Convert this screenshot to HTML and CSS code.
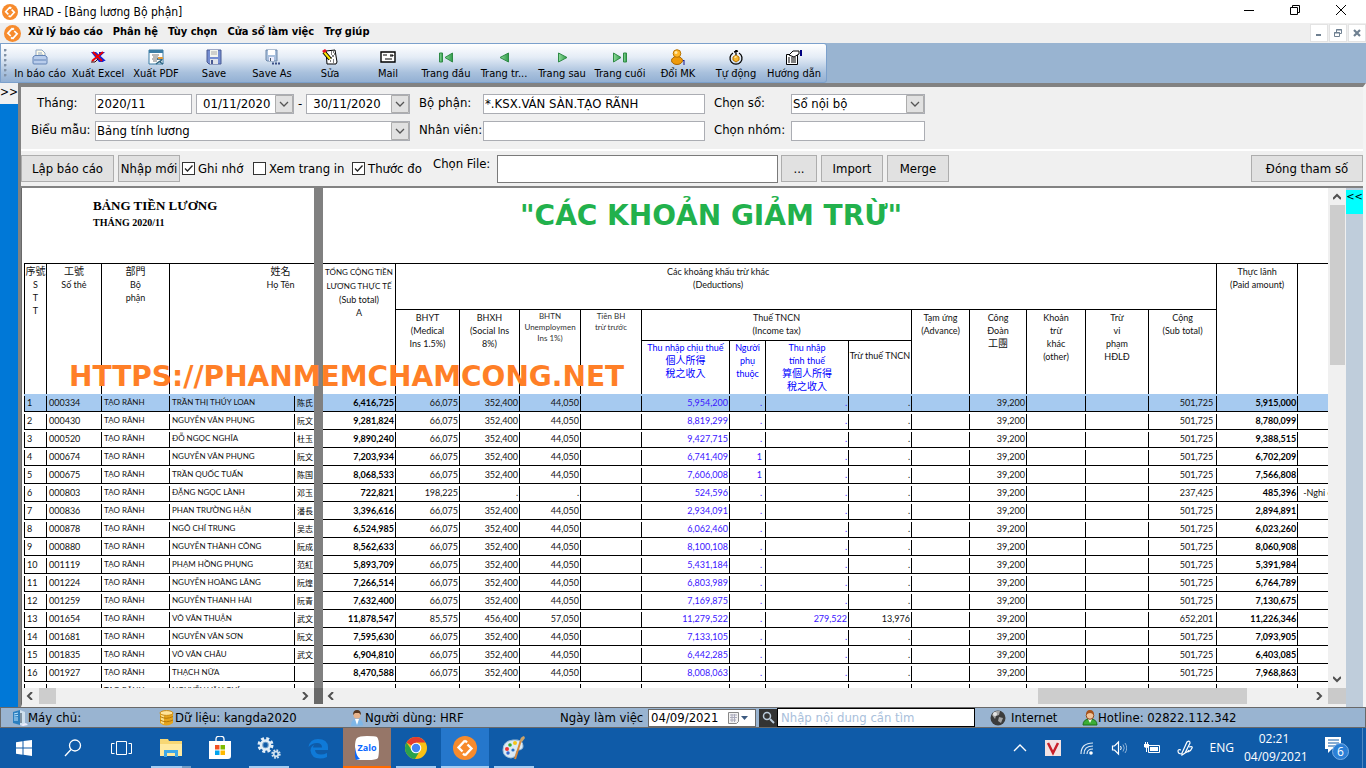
FILE: index.html
```html
<!DOCTYPE html>
<html lang="vi">
<head>
<meta charset="utf-8">
<title>HRAD - [Bảng lương Bộ phận]</title>
<link rel="stylesheet" href="styles.css">
</head>
<body>
<svg class="defs" aria-hidden="true">
  <symbol id="logo" viewBox="0 0 24 24">
    <circle cx="12" cy="12" r="12" fill="#f78b2d"/>
    <path d="M12 4.500 5.500 11.500 9.500 15.500M12 19.500 18.500 12.500 14.500 8.500M12 4.500 14 6.500M12 19.500 10 17.500" fill="none" stroke="#fff" stroke-width="2.400"/>
  </symbol>
  <symbol id="left" viewBox="0 0 8 8"><path d="M6 0 2 4l4 4" fill="none" stroke="#505050" stroke-width="2"/></symbol>
  <symbol id="right" viewBox="0 0 8 8"><path d="M2 0l4 4-4 4" fill="none" stroke="#505050" stroke-width="2"/></symbol>
  <symbol id="up" viewBox="0 0 8 8"><path d="M0 6l4-4 4 4" fill="none" stroke="#505050" stroke-width="2"/></symbol>
  <symbol id="down" viewBox="0 0 8 8"><path d="M0 2l4 4 4-4" fill="none" stroke="#505050" stroke-width="2"/></symbol>
  <linearGradient id="grn" x2="1"><stop stop-color="#8fdc9a"/><stop offset="1" stop-color="#2e9a4a"/></linearGradient>
</svg>

<header class="titlebar">
  <svg class="logo"><use href="#logo"/></svg>
  <h1>HRAD - [Bảng lương Bộ phận]</h1>
  <div class="winbtns">
    <button aria-label="Minimize"><svg viewBox="0 0 12 12"><path d="M1 6.500h10" stroke="#000"/></svg></button>
    <button aria-label="Restore"><svg viewBox="0 0 12 12"><path d="M1.500 3.500h7v7h-7zM3.500 3.500v-2h7v7h-2" fill="none" stroke="#000"/></svg></button>
    <button aria-label="Close"><svg viewBox="0 0 12 12"><path d="M1 1l10 10M11 1 1 11" stroke="#000"/></svg></button>
  </div>
</header>

<nav class="menubar">
  <svg class="logo big"><use href="#logo"/></svg>
  <button>Xử lý báo cáo</button><button>Phân hệ</button><button>Tùy chọn</button><button>Cửa sổ làm việc</button><button>Trợ giúp</button>
  <div class="mdi">
    <button aria-label="Minimize child"><svg viewBox="0 0 10 10"><path d="M2 7h5" stroke="#6f8091" stroke-width="2"/></svg></button>
    <button aria-label="Restore child"><svg viewBox="0 0 10 10"><path d="M1.500 4.500h5v4h-5zM3.500 4V1.500h5v4H7M1 5h6M3 2h6" fill="none" stroke="#6f8091"/></svg></button>
    <button aria-label="Close child"><svg viewBox="0 0 10 10"><path d="M2 2l6 6M8 2 2 8" stroke="#6f8091" stroke-width="2.200"/></svg></button>
  </div>
</nav>

<div class="toolwrap">
  <div class="toolstrip">
    <span class="grip"></span>
    <button><svg viewBox="0 0 16 16"><path d="M4 1h6l3 3v5H4z" fill="#fffbe8" stroke="#8fa6c4"/><path d="M6 4h4M6 6h5" stroke="#8fa6c4"/><path d="M1 8l2-1.500h10L15 8v6q0 1-1 1H2q-1 0-1-1z" fill="#b9cdec" stroke="#6283b5"/><path d="M2 11h12" stroke="#6283b5"/></svg>In báo cáo</button>
    <button><svg viewBox="0 0 16 16"><path d="M9 3h6L9.500 8 16 12H9z" fill="#0a1bd0"/><path d="M1 3h5l9 8-2 2H9z" fill="#1523d8"/><path d="M2 12 13 3M3 3l9 9" stroke="#e00" stroke-width="2"/><path d="M1 13h4l3-3" stroke="#400" fill="none"/></svg>Xuất Excel</button>
    <button><svg viewBox="0 0 16 16"><path d="M1 1h14v14H1z" fill="#fff" stroke="#3a7ca5"/><path d="M1 2.500h14" stroke="#3a7ca5" stroke-width="3"/><path d="M4 6h7M5 8h5M4 10h6M5 12h4" stroke="#777"/><path d="M9 10h5l-2 3 3 2M12 12l-4 3" fill="none" stroke="#2c6280" stroke-width="1.500"/><path d="M10 9h5" stroke="#e29c3c" stroke-width="2"/></svg>Xuất PDF</button>
    <button><svg viewBox="0 0 16 16"><path d="M1 1h14v14H3l-2-2z" fill="#758dd1" stroke="#4a5a92"/><path d="M4 1h8v7H4z" fill="#f4f5ee"/><path d="M5 3h6M5 5h6" stroke="#aaa"/><path d="M4 10h8v5H4z" fill="#dfe3ea"/><path d="M5 11h2v4H5z" fill="#4a5a92"/></svg>Save</button>
    <button><svg viewBox="0 0 16 16"><path d="M2 1h11v11H3l-1-1z" fill="#a9c0dd" stroke="#6c87a9"/><path d="M4 1h7v5H4z" fill="#fff"/><path d="M5 8h5v4H5z" fill="#eef"/><path d="M6 9h1v3H6z" fill="#456"/><path d="M8 14.500h2m1 0h2m1 0h2" stroke="#3a4f87" stroke-width="2"/></svg>Save As</button>
    <button><svg viewBox="0 0 16 16"><path d="M4 2l9-1 2 12-1 2H5z" fill="#fff" stroke="#000"/><path d="M9 3h1m1 0h1M9 5h1m2 0h1M10 7h2M7 9h1m1 0h1m1 2h1m-4 1h1m2 1h1" stroke="#000"/><path d="M2 3l6 7" stroke="#000" stroke-width="4"/><path d="M2 3l6 7" stroke="#ffe800" stroke-width="2"/><path d="M0 2l3-2 2 2-3 2z" fill="#e81123"/></svg>Sửa</button>
    <button><svg viewBox="0 0 16 16"><path d="M1 3h14v10H1z" fill="#fff" stroke="#000" stroke-width="1.400"/><path d="M3 6h4M5 10h7M10 6h3v1h-3" stroke="#000" fill="none"/></svg>Mail</button>
    <button><svg viewBox="0 0 16 16"><path d="M1.500 4v9h3V4z" fill="url(#grn)" stroke="#2e8a45"/><path d="M14.500 4v9L7 8.500z" fill="url(#grn)" stroke="#2e8a45"/></svg>Trang đầu</button>
    <button><svg viewBox="0 0 16 16"><path d="M12.500 4v9L4 8.500z" fill="url(#grn)" stroke="#2e8a45"/></svg>Trang tr...</button>
    <button><svg viewBox="0 0 16 16"><path d="M4.500 4v9L13 8.500z" fill="url(#grn)" stroke="#2e8a45"/></svg>Trang sau</button>
    <button><svg viewBox="0 0 16 16"><path d="M1.500 4v9L9 8.500z" fill="url(#grn)" stroke="#2e8a45"/><path d="M11.500 4v9h3V4z" fill="url(#grn)" stroke="#2e8a45"/></svg>Trang cuối</button>
    <button><svg viewBox="0 0 16 16"><ellipse cx="7" cy="11.500" rx="5.500" ry="4" fill="#ef9a0a" stroke="#a86300"/><circle cx="7" cy="4.500" r="3.800" fill="#ffb628" stroke="#b87300"/><circle cx="6" cy="3.500" r="1.500" fill="#ffe9a8"/><path d="M13 12l1-1v5" stroke="#15158c" fill="none"/></svg>Đổi MK</button>
    <button><svg viewBox="0 0 16 16"><path d="M11 4a6 6 0 1 1-6 0M8 1v5M6 3l4-1" fill="none" stroke="#000" stroke-width="1.300"/><path d="M5 8l3-2 3 2v3l-3 2-3-2z" fill="#f6b62c" stroke="#b87300"/><path d="M6 8l2-1 1 1-2 1z" fill="#fff2b5"/></svg>Tự động</button>
    <button><svg viewBox="0 0 16 16"><path d="M.5 5.500h11v10H.5z" fill="#fff" stroke="#000"/><path d="M2 9h2m1 0h5M2 11h2m1 0h5M2 13h2m1 0h5" stroke="#000"/><path d="M3 6l4-4h6v3L8 8z" fill="#fff" stroke="#000"/><path d="M14 1h2v6h-2z" fill="#000080"/></svg>Hướng dẫn</button>
  </div>
</div>

<main class="work">
  <aside class="dock-left"><button>&gt;&gt;</button></aside>
  <div class="child">
    <form class="params">
      <label class="indent" for="thang">Tháng:</label>
      <div class="dates">
        <input id="thang" class="month" value="2020/11">
        <select class="date" aria-label="Từ ngày"><option>01/11/2020</option></select>
        <span>-</span>
        <select class="date wide" aria-label="Đến ngày"><option>30/11/2020</option></select>
      </div>
      <label for="bophan">Bộ phận:</label>
      <input id="bophan" value="*.KSX.VÁN SÀN.TẠO RÃNH">
      <label for="so">Chọn sổ:</label>
      <select id="so"><option>Sổ nội bộ</option></select>
      <label for="mau">Biểu mẫu:</label>
      <select id="mau"><option>Bảng tính lương</option></select>
      <label for="nv">Nhân viên:</label>
      <input id="nv">
      <label for="nhom">Chọn nhóm:</label>
      <input id="nhom">
    </form>

    <div class="actions">
      <button class="btn b-report">Lập báo cáo</button>
      <button class="btn b-new">Nhập mới</button>
      <label class="chk c1"><input type="checkbox" checked>Ghi nhớ</label>
      <label class="chk c2"><input type="checkbox">Xem trang in</label>
      <label class="chk c3"><input type="checkbox" checked>Thước đo</label>
      <label class="filelabel" for="file">Chọn File:</label>
      <input id="file">
      <button class="btn b-dots">...</button>
      <button class="btn b-io">Import</button>
      <button class="btn b-io">Merge</button>
      <button class="btn b-close">Đóng tham số</button>
    </div>

    <div class="lower">
      <section class="report">
        <div class="pane pane-left">
          <div class="sheet">
            <div class="doc-title"><h2>BẢNG TIỀN LƯƠNG</h2><p>THÁNG 2020/11</p></div>
            <table class="grid first">
              <colgroup><col class="w23"><col class="w55"><col class="w68"><col class="w125"><col class="w97"></colgroup>
              <thead><tr class="tall">
                <th><b>序號</b><br>S<br>T<br>T</th><th><b>工號</b><br>Số thẻ</th><th><b>部門</b><br>Bộ<br>phận</th><th colspan="2"><b>姓名</b><br>Họ Tên</th>
              </tr></thead>
              <tbody id="people"></tbody>
            </table>
          </div>
          <div class="hscroll"><svg><use href="#left"/></svg><i class="thumb t1"></i><svg class="end"><use href="#right"/></svg></div>
        </div>
        <div class="splitter"></div>
        <div class="pane pane-right">
          <div class="sheet">
            <h2 class="banner">"CÁC KHOẢN GIẢM TRỪ"</h2>
            <table class="grid">
              <colgroup><col class="w73"><col class="w64"><col class="w60"><col class="w61"><col class="w61"><col class="w88"><col class="w36"><col class="w83"><col class="w63"><col class="w58"><col class="w57"><col class="w59"><col class="w63"><col class="w68"><col class="w81"><col class="w100"></colgroup>
              <thead>
                <tr class="h1"><th rowspan="3"><span class="caps">TỔNG CỘNG TIỀN<br>LƯƠNG THỰC TẾ</span><br>(Sub total)<br>A</th><th colspan="13" class="line deductions">Các khoảng khấu trừ khác<br>(Deductions)</th><th rowspan="3">Thực lãnh<br>(Paid amount)</th><th rowspan="3"></th></tr>
                <tr class="h2"><th rowspan="2">BHYT<br>(Medical<br>Ins 1.5%)</th><th rowspan="2">BHXH<br>(Social Ins<br>8%)</th><th rowspan="2" class="small">BHTN<br>Unemploymen<br>Ins 1%)</th><th rowspan="2" class="small">Tiền BH<br>trừ trước</th><th colspan="4" class="line">Thuế TNCN<br>(Income tax)</th><th rowspan="2">Tạm ứng<br>(Advance)</th><th rowspan="2">Công<br>Đoàn<br><b>工團</b></th><th rowspan="2">Khoản<br>trừ<br>khác<br>(other)</th><th rowspan="2">Trừ<br>vi<br>phạm<br>HĐLĐ</th><th rowspan="2">Cộng<br>(Sub total)</th></tr>
                <tr class="h3"><th class="blue">Thu nhập chịu thuế<br><b>個人所得</b><br><b>稅之收入</b></th><th class="blue">Người<br>phụ<br>thuộc</th><th class="blue">Thu nhập<br>tính thuế<br><b>算個人所得</b><br><b>稅之收入</b></th><th class="lowered">Trừ thuế TNCN</th></tr>
              </thead>
              <tbody id="sums"></tbody>
            </table>
          </div>
          <div class="hscroll"><svg><use href="#left"/></svg><i class="thumb t2"></i><svg class="end near"><use href="#right"/></svg></div>
        </div>
        <div class="vscroll"><svg><use href="#up"/></svg><i class="thumb"></i><svg class="end"><use href="#down"/></svg><i class="corner"></i></div>
        <p class="watermark">HTTPS://PHANMEMCHAMCONG.NET</p>
      </section>
      <aside class="dock-right"><button>&lt;&lt;</button></aside>
    </div>
  </div>
</main>

<footer class="status">
  <span class="s1"><svg viewBox="0 0 16 16"><path d="M1 2l7-2v15l-7-2z" fill="#2b7fc0"/><path d="M8 0l5 2v12l-5 1z" fill="#cfe0ee"/><path d="M2 4l4-1M2 6l4-.500M2 8h4M2 10h4" stroke="#bfe6ff"/><path d="M9 3v10" stroke="#345"/><path d="M8 15l6-2 2 2-5 1z" fill="#eef"/></svg>Máy chủ:</span>
  <span class="s2"><svg viewBox="0 0 16 16"><path d="M1 3v10q6 5 13 0V3z" fill="#e5a41d"/><path d="M2 4v9l3 1V4z" fill="#fbe08a"/><ellipse cx="7.500" cy="3" rx="6.500" ry="2.400" fill="#ffe49a" stroke="#c98a14"/><path d="M1 6.500q6 3.500 13 0M1 10q6 3.500 13 0" fill="none" stroke="#b37708"/></svg>Dữ liệu: kangda2020</span>
  <span class="s3"><svg viewBox="0 0 16 16"><path d="M2 16q0-7 6-7t6 6.500z" fill="#7eb6e6"/><path d="M6 9l2 6 2-6z" fill="#fff"/><circle cx="8" cy="5" r="3.500" fill="#e8b48c"/><path d="M4 5q0-5 4-5t4 5l-2-2H6z" fill="#57371f"/></svg>Người dùng: HRF</span>
  <label class="s4" for="workday">Ngày làm việc</label>
  <span class="day"><input id="workday" value="04/09/2021"><button aria-label="Lịch"><svg viewBox="0 0 22 14"><path d="M1.500 1.500h10v9l-2 2h-8z" fill="#f2f2f2" stroke="#888"/><path d="M3 4h7M3 6.500h7M3 9h6M5 3v8M7.500 3v8" stroke="#aab"/><path d="M14 5h7l-3.500 4z" fill="#3c5a80"/></svg></button></span>
  <button class="find" aria-label="Tìm"><svg viewBox="0 0 16 16"><circle cx="7" cy="6" r="3.500" fill="none" stroke="#bcd" stroke-width="1.500"/><path d="M10 9l4 4" stroke="#bcd" stroke-width="2"/></svg></button>
  <input class="search" aria-label="Tìm kiếm" placeholder="Nhập nội dung cần tìm">
  <span class="s5"><svg viewBox="0 0 16 16"><circle cx="8" cy="8" r="7.500" fill="#3c3c3c"/><path d="M2 5q3-5 8-4l-1 4-3 1-1 3zM9 7l4 1-2 5-3-2z" fill="#a5a5a5"/><circle cx="5" cy="4" r="2" fill="#e5e5e5"/></svg>Internet</span>
  <span class="s6"><svg viewBox="0 0 16 16"><path d="M1 15q0-6 7-6t7 6z" fill="#3cae35" stroke="#1d6f1a"/><path d="M6 9l2 4 2-4z" fill="#fff"/><circle cx="8" cy="5.500" r="3.800" fill="#f2c49a" stroke="#8a4a1e"/><path d="M4 5q0-5 4-5t4 5q-2-2-4-2T4 5z" fill="#a8541c"/></svg>Hotline: 02822.112.342</span>
</footer>

<div class="taskbar">
  <button aria-label="Start"><svg viewBox="0 0 24 24"><path d="M4 6.200 10.500 5.200V11.500H4zM11.500 5 20 4v7.500h-8.500zM4 12.500h6.500v6.300L4 17.800zM11.500 12.500H20V20l-8.500-1.200z" fill="#fff"/></svg></button>
  <button aria-label="Search"><svg viewBox="0 0 24 24"><circle cx="14" cy="9.500" r="5.500" fill="none" stroke="#fff" stroke-width="1.300"/><path d="M10 13.500 4 20" stroke="#fff" stroke-width="1.300"/></svg></button>
  <button aria-label="Task view"><svg viewBox="0 0 24 24"><path d="M6.500 5.500h10v13h-10zM4.500 7.500h-3v10h3M18.500 7.500h3v10h-3" fill="none" stroke="#fff"/></svg></button>
  <button class="run multi" aria-label="Explorer"><svg viewBox="0 0 24 24"><path d="M1 3h8l1 2h13v15H1z" fill="#f7d774"/><path d="M1 8h22v12H1z" fill="#ffeaa0"/><path d="M5 21v-7h14v7h-3v-4H8v4z" fill="#3fa9e8"/></svg></button>
  <button aria-label="Store"><svg viewBox="0 0 24 24"><path d="M8 6V3q0-3 4-3t4 3v3" fill="none" stroke="#fff" stroke-width="1.300"/><path d="M1 5h22v15q0 3-3 3H1z" fill="#fff"/><path d="M7 9h4.500v4.500H7z" fill="#f25022"/><path d="M12.500 9H17v4.500h-4.500z" fill="#7fba00"/><path d="M7 14.500h4.500V19H7z" fill="#00a4ef"/><path d="M12.500 14.500H17V19h-4.500z" fill="#ffb900"/></svg></button>
  <button class="run" aria-label="Services"><svg viewBox="0 0 24 24"><circle cx="8.500" cy="9" r="6.500" fill="none" stroke="#e3eef7" stroke-width="3" stroke-dasharray="2.900 2.200"/><circle cx="8.500" cy="9" r="4.500" fill="#6c9cc8" stroke="#e3eef7" stroke-width="2.500"/><circle cx="8.500" cy="9" r="2.200" fill="#0f5ba8"/><circle cx="19" cy="18" r="3.700" fill="none" stroke="#cfe0ee" stroke-width="2" stroke-dasharray="1.700 1.200"/><circle cx="19" cy="18" r="2.300" fill="#0f5ba8" stroke="#cfe0ee" stroke-width="1.800"/></svg></button>
  <button aria-label="Edge"><svg viewBox="0 0 24 24"><path d="M2.500 11Q4 3 12 3q9.500 0 10 8v3H9q.500 4.500 6 4.500 3 0 6-1.500v4q-3 1.500-7 1.500-8.500 0-9.500-8 0-4 4-6-1.500 1.500-1.500 3h9q0-4.500-5-4.500-5 0-8.500 4z" fill="#0f7ad8"/></svg></button>
  <button class="alert" aria-label="Zalo"><svg viewBox="0 0 24 24"><path d="M2 2Q4 0 12 0t10 1q2 2 2 10t-1 11q-2 2-10 2H1l1.500-3Q0 18 0 11T2 2z" fill="#fff"/><path d="M1 24q-2-5-1-13 1 9 5 12z" fill="#0a68ff"/><text x="12" y="15" text-anchor="middle" font-size="9" font-weight="700" fill="#0a68ff">Zalo</text></svg></button>
  <button class="run" aria-label="Chrome"><svg viewBox="0 0 24 24"><circle cx="12" cy="12" r="11" fill="#fbc116"/><path d="M12 12 2.500 6.500A11 11 0 0 1 21.500 6.500H12z" fill="#e33b2e"/><path d="M2.500 6.500A11 11 0 0 0 11 23l5-8.500h-8z" fill="#2ba24c"/><circle cx="12" cy="12" r="5.300" fill="#fff"/><circle cx="12" cy="12" r="4.200" fill="#4285f4"/></svg></button>
  <button class="active" aria-label="HRAD"><svg viewBox="0 0 24 24"><use href="#logo"/></svg></button>
  <button class="run" aria-label="Paint"><svg viewBox="0 0 24 24"><path d="M1 14Q1 5 11 4t10 6q0 4-5 4-2 1-2 4t-5 4Q1 21 1 14z" fill="#dbeaf5" stroke="#9fbdd3"/><circle cx="5" cy="13" r="2" fill="#e33"/><circle cx="8" cy="9" r="1.800" fill="#3a3"/><circle cx="13" cy="7" r="2" fill="#f5c518"/><circle cx="6" cy="17" r="1.700" fill="#36c"/><circle cx="11" cy="14" r="1.600" fill="#2a6fc0"/><path d="M19 4 13 23" stroke="#d98a3d" stroke-width="2"/><path d="M18 5q0-4 4-5l1 2-3 4z" fill="#c9a36a"/></svg></button>
  <div class="tray">
    <svg class="t16" viewBox="0 0 16 16"><path d="M2 11l6-6 6 6" fill="none" stroke="#fff" stroke-width="1.300"/></svg>
    <svg class="t16" viewBox="0 0 16 16"><path d="M0 0h16v16H0z" fill="#f3e3e3"/><path d="M3 3l5 10 5-10" fill="none" stroke="#c8202a" stroke-width="2.500"/></svg>
    <svg class="t16" viewBox="0 0 16 16"><path d="M3 14Q3 3 15 3M6 14q0-8 9-8M9 14q0-5 6-5" fill="none" stroke="#dce9f5" stroke-width="1.200"/><circle cx="13" cy="13" r="1.800" fill="#fff"/></svg>
    <svg class="t16" viewBox="0 0 16 16"><path d="M1.500 6h2l4-4v12l-4-4h-2z" fill="none" stroke="#fff" stroke-width="1.200"/><path d="M9.500 6q1.500 2 0 4" fill="none" stroke="#fff"/><path d="M12 4.500q2.500 3.500 0 7M14 3q3.500 5 0 10" fill="none" stroke="#8fb4d8"/></svg>
    <svg class="t16" viewBox="0 0 16 16"><path d="M4.500 5.500h11v7h-11z" fill="none" stroke="#fff"/><path d="M6 7h8v4H6zM0 4h5v3q-2 2-5 0zM1 2h1v2H1zM3 2h1v2H3zM2 8h1v4H2z" fill="#fff"/></svg>
    <svg class="t16" viewBox="0 0 16 16"><path d="M5 14q-4 0-4-3 0-2 3-1M5 13 10 2q3-2 3 1L8 13l-3 2zM8 13q3-1 4-3M12 7q4-1 3 1-1 3-4 4" fill="none" stroke="#fff" stroke-width="1.200"/></svg>
    <span class="lang">ENG</span>
    <span class="clock">02:21<br>04/09/2021</span>
    <button class="notes" aria-label="Notifications"><svg viewBox="0 0 24 24"><path d="M0 1h16v12H7l-4 4v-4H0z" fill="#fff"/><path d="M3 4h11M3 7h11M3 10h8" stroke="#0f5ba8"/><circle cx="15.500" cy="15.500" r="8" fill="#2b7fd6" stroke="#79aee6"/><text x="15.500" y="20" text-anchor="middle" font-size="12" fill="#fff">6</text></svg></button>
  </div>
</div>
<script src="app.js"></script>
</body>
</html>
```
FILE: styles.css
```css
* { box-sizing: border-box; }
body {
  margin: 0; height: 100vh; overflow: hidden;
  display: flex; flex-direction: column;
  font: 12px/16px "DejaVu Sans Condensed", "DejaVu Sans", sans-serif;
  color: #000; background: #f0f0f0;
}
button, input, select { font: inherit; color: inherit; margin: 0; padding: 0; border: 0; border-radius: 0; background: none; }
h1, h2, p { margin: 0; font-weight: normal; }
svg { display: block; flex: none; }
.defs { position: absolute; width: 0; height: 0; }

.titlebar { display: flex; align-items: center; height: 23px; padding-left: 2px; background: #fff; }
.titlebar h1 { font-size: 12px; margin-left: 5px; flex: 1; }
.logo { width: 16px; height: 16px; }
.logo.big { width: 17px; height: 17px; }
.winbtns { display: flex; align-self: flex-start; margin-right: 2px; }
.winbtns button { width: 46px; height: 20px; display: flex; align-items: center; justify-content: center; }
.winbtns svg { width: 12px; height: 12px; }

.menubar { display: flex; align-items: center; height: 20px; padding-left: 4px; gap: 10px; font-weight: bold; font-size: 11px; background: #efefef; }
.menubar > button { padding-bottom: 2px; }
.menubar .logo { margin-right: -3px; }
.mdi { display: flex; gap: 1px; margin-left: auto; }
.mdi button { width: 18px; height: 18px; background: #fff; border: 1px solid #e3e3e3; display: flex; align-items: center; justify-content: center; }
.mdi svg { width: 10px; height: 10px; }

.toolwrap { height: 40px; background: #99b4d1; display: flex; }
.toolstrip { display: flex; width: 827px; padding-left: 3px; border: 1px solid #7ba0cc; border-radius: 0 3px 3px 0; background: linear-gradient(#fff, #e4ecf6 35%, #a9c1dd 75%, #93b0d3); }
.grip { width: 7px; margin: 5px 0 3px; background: radial-gradient(circle at 1px 1px, #8292a6 1px, transparent 2px) 0 0 / 8px 5px; }
.toolstrip button { width: 58px; display: flex; flex-direction: column; align-items: center; padding-top: 5px; white-space: nowrap; font-size: 11px; line-height: 18px; }
.toolstrip svg { width: 16px; height: 16px; }

.work { flex: 1; display: flex; min-height: 0; }
.dock-left { width: 18px; background: #0078d7; }
.dock-left button { width: 18px; height: 21px; background: #f0f0f0; padding-bottom: 4px; line-height: 14px; }
.child { flex: 1; min-width: 0; display: flex; flex-direction: column; border: solid; border-width: 4px 3px 0 3px; border-color: #828282 #f4f4f4 #fff #828282; }

.params { display: grid; grid-template-columns: 73px 315px 73px 222px 86px 134px; grid-template-rows: 27px 27px; align-items: center; height: 64px; padding: 3px 0 0 1px; font-size: 13px; line-height: 18px; border-bottom: 2px solid #fff; }
.params label { padding: 0 0 2px 9px; }
.params label.indent { padding-left: 15px; }
.params input, .params select { height: 20px; width: 100%; background-color: #fff; border: 1px solid #abadb3; padding: 0 1px; }
.params select, .params select.date { appearance: none; background: #fff url("data:image/svg+xml,%3Csvg xmlns='http://www.w3.org/2000/svg' width='18' height='18'%3E%3Cpath d='M.5.5h17v17H.5z' fill='%23e1e1e1' stroke='%23adadad'/%3E%3Cpath d='M5 7l4 4 4-4' fill='none' stroke='%23555' stroke-width='1.300'/%3E%3C/svg%3E") right center no-repeat; }
.dates { display: flex; align-items: center; gap: 4px; }
.dates .month { width: 97px; }
.dates .date { width: 98px; padding-left: 6px; }
.dates .wide { flex: 1; }

.actions { display: flex; align-items: center; height: 37px; font-size: 13px; border-bottom: 2px solid #828282; }
.btn { height: 27px; background: #e1e1e1; border: 1px solid #adadad; white-space: nowrap; }
.b-report { width: 93px; margin-right: 4px; }
.b-new { width: 62px; margin-right: 2px; }
.chk { display: flex; align-items: center; gap: 3px; white-space: nowrap; }
.chk input { appearance: none; width: 13px; height: 13px; background: #fff; border: 1px solid #333; }
.chk input:checked { background: #fff url("data:image/svg+xml,%3Csvg xmlns='http://www.w3.org/2000/svg' width='11' height='11'%3E%3Cpath d='M2 5.500l2.500 2.500L9.500 2.500' fill='none' stroke='%23222' stroke-width='1.300'/%3E%3C/svg%3E") center no-repeat; }
.c1 { width: 71px; } .c2 { width: 99px; } .c3 { width: 81px; }
.filelabel { width: 64px; padding-bottom: 10px; white-space: nowrap; }
#file { width: 281px; height: 28px; background: #fff; border: 1px solid #7a7a7a; padding: 0 4px; margin-right: 3px; }
.b-dots { width: 36px; margin-right: 4px; }
.b-io { width: 62px; margin-right: 4px; }
.b-close { width: 112px; margin-left: auto; }

.lower { flex: 1; display: flex; min-height: 0; }
.report { flex: 1; display: flex; min-width: 0; position: relative; background: #fff; border-left: 1px solid #696969; border-bottom: 3px solid #f0f0f0; }
.pane { display: flex; flex-direction: column; min-width: 0; }
.pane-left { width: 292px; }
.pane-right { flex: 1; }
.splitter { width: 9px; background: linear-gradient(#808080, #808080) top / 100% calc(100% - 16px) no-repeat #696969; }
.sheet { flex: 1; min-height: 0; overflow: hidden; }
.doc-title { height: 75px; padding: 8px 0 0 71px; font-family: "Liberation Serif", serif; }
.doc-title h2 { font-size: 13px; line-height: 20px; font-weight: bold; }
.doc-title p { font-size: 10px; line-height: 14px; font-weight: bold; }
.banner { height: 75px; padding-left: 197px; font: bold 28px/55px "DejaVu Sans", sans-serif; color: #22b14c; white-space: nowrap; }

.grid { table-layout: fixed; width: 1075px; border-spacing: 0; border-top: 1px solid #000; font: 9px/13px Lato, "Open Sans", "Noto Sans CJK TC", sans-serif; color: #111; }
.grid.first { width: 368px; margin-left: 2px; }
.grid th { font-weight: normal; vertical-align: top; padding: 1px 0 0; border-right: 1px solid #000; white-space: nowrap; overflow: hidden; }
.grid th b { font-family: "Noto Sans CJK TC", sans-serif; font-size: 10px; line-height: 12px; font-weight: normal; }
.grid th.line { border-bottom: 1px solid #000; }
.grid th.deductions { padding-right: 176px; }
.grid th.small { font-size: 8px; line-height: 11px; color: #333; }
.caps { font-size: 8px; }
.grid th.blue { color: #00f; }
.grid th.lowered { padding-top: 8px; }
.grid.first th:first-child { border-left: 1px solid #000; }
.grid .tall th { height: 130px; }
.h1 th { height: 46px; }
.h2 th { height: 31px; }
.grid .h3 th { height: 53px; }
.grid .h3 .blue { padding-top: 0; }
.grid td { height: 18px; padding: 0 2px; text-align: right; line-height: 17px; white-space: nowrap; overflow: hidden; border-bottom: 1px solid #000; background: linear-gradient(#000, #000) right 2px / 1px 16px no-repeat; }
.grid.first td { text-align: left; }
.grid.first td:first-child { padding-left: 3px; background: linear-gradient(#000, #000) right 2px / 1px 16px no-repeat, linear-gradient(#000, #000) left 2px / 1px 16px no-repeat; }
.grid td.name { font-size: 8px; }
.grid td.strong { font-weight: bold; color: #000; }
.grid td.blue { color: #3a14ff; }
.grid td.sum { padding-right: 4px; }
.grid td.note { text-align: left; padding-left: 5px; }
.grid td.han { font-family: "Noto Sans CJK SC", sans-serif; font-size: 8px; color: #000; }
.grid tr.sel { background: #a6caf0; }
.w23 { width: 23px; } .w36 { width: 36px; } .w55 { width: 55px; } .w57 { width: 57px; } .w58 { width: 58px; } .w59 { width: 59px; }
.w60 { width: 60px; } .w61 { width: 61px; } .w63 { width: 63px; } .w64 { width: 64px; } .w68 { width: 68px; } .w73 { width: 73px; }
.w81 { width: 81px; } .w83 { width: 83px; } .w88 { width: 88px; } .w97 { width: 97px; } .w100 { width: 100px; } .w125 { width: 125px; }

.hscroll { height: 16px; display: flex; align-items: center; background: #f0f0f0; padding-left: 4px; }
.hscroll svg, .vscroll svg { width: 8px; height: 8px; }
.thumb { background: #cdcdcd; flex: none; }
.hscroll .thumb { height: 16px; }
.t1 { width: 17px; margin-left: 5px; }
.t2 { width: 209px; margin-left: auto; }
.hscroll .end { margin: 0 5px 0 auto; }
.hscroll .near { margin-left: 68px; }
.vscroll { width: 18px; display: flex; flex-direction: column; align-items: center; padding-top: 5px; background: #f0f0f0; }
.vscroll .thumb { width: 15px; height: 160px; margin-top: 4px; }
.vscroll .end { margin-top: auto; margin-bottom: 5px; }
.corner { width: 100%; height: 16px; background: #cacaca; }
.watermark { position: absolute; left: 47px; top: 172px; font: bold 28px/34px "DejaVu Sans", sans-serif; color: #ff7f27; white-space: nowrap; }
.dock-right { width: 17px; background: #bfcddb; }
.dock-right button { width: 100%; height: 24px; background: #0ff; padding-bottom: 10px; line-height: 14px; font-size: 11px; }

.status { display: flex; align-items: center; height: 21px; padding-left: 11px; font-size: 13px; background: #99b4d1; border: solid #696969; border-width: 1px; white-space: nowrap; }
.status span { display: flex; align-items: center; }
.status svg { width: 16px; height: 16px; }
.s1 { width: 147px; } .s2 { width: 190px; } .s3 { width: 211px; } .s4 { width: 88px; }
.status .day { width: 108px; height: 18px; background: #fff; border: 1px solid #696969; }
.day input { width: 78px; padding-left: 2px; }
.status .day svg { width: 22px; height: 14px; }
.find { width: 18px; height: 18px; margin-left: 3px; background: #333; display: flex; align-items: center; justify-content: center; }
.search { width: 198px; height: 19px; background: #fff; border: 1px solid #000; padding-left: 3px; margin-right: 15px; }
.search::placeholder { color: #a9c0db; opacity: 1; }
.s5 { width: 92px; gap: 5px; }

.taskbar { display: flex; gap: 1px; height: 40px; background: #0f5ba8; color: #fff; font-family: "Open Sans", "Noto Sans", sans-serif; }
.taskbar button { width: 48px; display: flex; align-items: center; justify-content: center; color: #fff; }
.taskbar svg { width: 24px; height: 24px; }
.taskbar .run { background: linear-gradient(#a3cdf3, #a3cdf3) center bottom / 40px 2px no-repeat; }
.taskbar .multi { background: linear-gradient(90deg, #a3cdf3 31px, #6f9cc6 31px) center bottom / 40px 2px no-repeat; }
.taskbar .alert { background: linear-gradient(#ff6a00, #ff6a00) center bottom / 100% 2px no-repeat #967668; }
.taskbar .active { background: linear-gradient(#a3cdf3, #a3cdf3) center bottom / 100% 2px no-repeat #2577cc; }
.tray { display: flex; align-items: center; gap: 17px; margin-left: auto; font-size: 12px; }
.tray .t16 { width: 16px; height: 16px; }
.lang { margin-right: -7px; }
.clock { width: 60px; margin-right: -1px; text-align: center; line-height: 18px; }
.taskbar .notes { width: 43px; height: 40px; padding-right: 8px; border-right: 1px solid #4c87c2; margin-right: 3px; }
```
FILE: app.js
```js
const rows = [
  ["1","000334","TRẦN THỊ THÚY LOAN","陈氏","6,416,725","66,075","352,400","44,050","5,954,200",".",".",".","39,200","501,725","5,915,000",""],
  ["2","000430","NGUYỄN VĂN PHỤNG","阮文","9,281,824","66,075","352,400","44,050","8,819,299",".",".",".","39,200","501,725","8,780,099",""],
  ["3","000520","ĐỖ NGỌC NGHĨA","杜玉","9,890,240","66,075","352,400","44,050","9,427,715",".",".",".","39,200","501,725","9,388,515",""],
  ["4","000674","NGUYỄN VĂN PHỤNG","阮文","7,203,934","66,075","352,400","44,050","6,741,409","1",".",".","39,200","501,725","6,702,209",""],
  ["5","000675","TRẦN QUỐC TUẤN","陈国","8,068,533","66,075","352,400","44,050","7,606,008","1",".",".","39,200","501,725","7,566,808",""],
  ["6","000803","ĐẶNG NGỌC LÀNH","邓玉","722,821","198,225",".",".","524,596",".",".",".","39,200","237,425","485,396","-Nghi c"],
  ["7","000836","PHAN TRƯỜNG HẬN","潘長","3,396,616","66,075","352,400","44,050","2,934,091",".",".",".","39,200","501,725","2,894,891",""],
  ["8","000878","NGÔ CHÍ TRUNG","吴志","6,524,985","66,075","352,400","44,050","6,062,460",".",".",".","39,200","501,725","6,023,260",""],
  ["9","000880","NGUYỄN THÀNH CÔNG","阮成","8,562,633","66,075","352,400","44,050","8,100,108",".",".",".","39,200","501,725","8,060,908",""],
  ["10","001119","PHẠM HỒNG PHỤNG","范紅","5,893,709","66,075","352,400","44,050","5,431,184",".",".",".","39,200","501,725","5,391,984",""],
  ["11","001224","NGUYỄN HOÀNG LÃNG","阮煌","7,266,514","66,075","352,400","44,050","6,803,989",".",".",".","39,200","501,725","6,764,789",""],
  ["12","001259","NGUYỄN THANH HẢI","阮青","7,632,400","66,075","352,400","44,050","7,169,875",".",".",".","39,200","501,725","7,130,675",""],
  ["13","001654","VÕ VĂN THUẬN","武文","11,878,547","85,575","456,400","57,050","11,279,522",".","279,522","13,976","39,200","652,201","11,226,346",""],
  ["14","001681","NGUYỄN VĂN SƠN","阮文","7,595,630","66,075","352,400","44,050","7,133,105",".",".",".","39,200","501,725","7,093,905",""],
  ["15","001835","VÕ VĂN CHÂU","武文","6,904,810","66,075","352,400","44,050","6,442,285",".",".",".","39,200","501,725","6,403,085",""],
  ["16","001927","THẠCH NỮA","","8,470,588","66,075","352,400","44,050","8,008,063",".",".",".","39,200","501,725","7,968,863",""],
  ["","","NGUYỄN VĂN CHÍ","","","","","","","","","","","","",""]
];
const cell = (text, cls) => `<td${cls ? ` class="${cls}"` : ""}>${text}</td>`;
const line = (cells, i) => `<tr${i === 0 ? ' class="sel"' : ""}>${cells.join("")}</tr>`;

document.getElementById("people").innerHTML = rows.map((r, i) => line([
  cell(r[0]), cell(r[1]), cell("TẠO RÃNH", "name"), cell(r[2], "name"), cell(r[3], "han")
], i)).join("");

document.getElementById("sums").innerHTML = rows.map((r, i) => line([
  cell(r[4], "strong"), cell(r[5]), cell(r[6]), cell(r[7]), cell(""),
  cell(r[8], "blue"), cell(r[9], "blue sum"), cell(r[10], "blue"), cell(r[11]), cell(""),
  cell(r[12]), cell(""), cell(""), cell(r[13], "sum"), cell(r[14], "strong"), cell(r[15], "note")
], i)).join("");
```
